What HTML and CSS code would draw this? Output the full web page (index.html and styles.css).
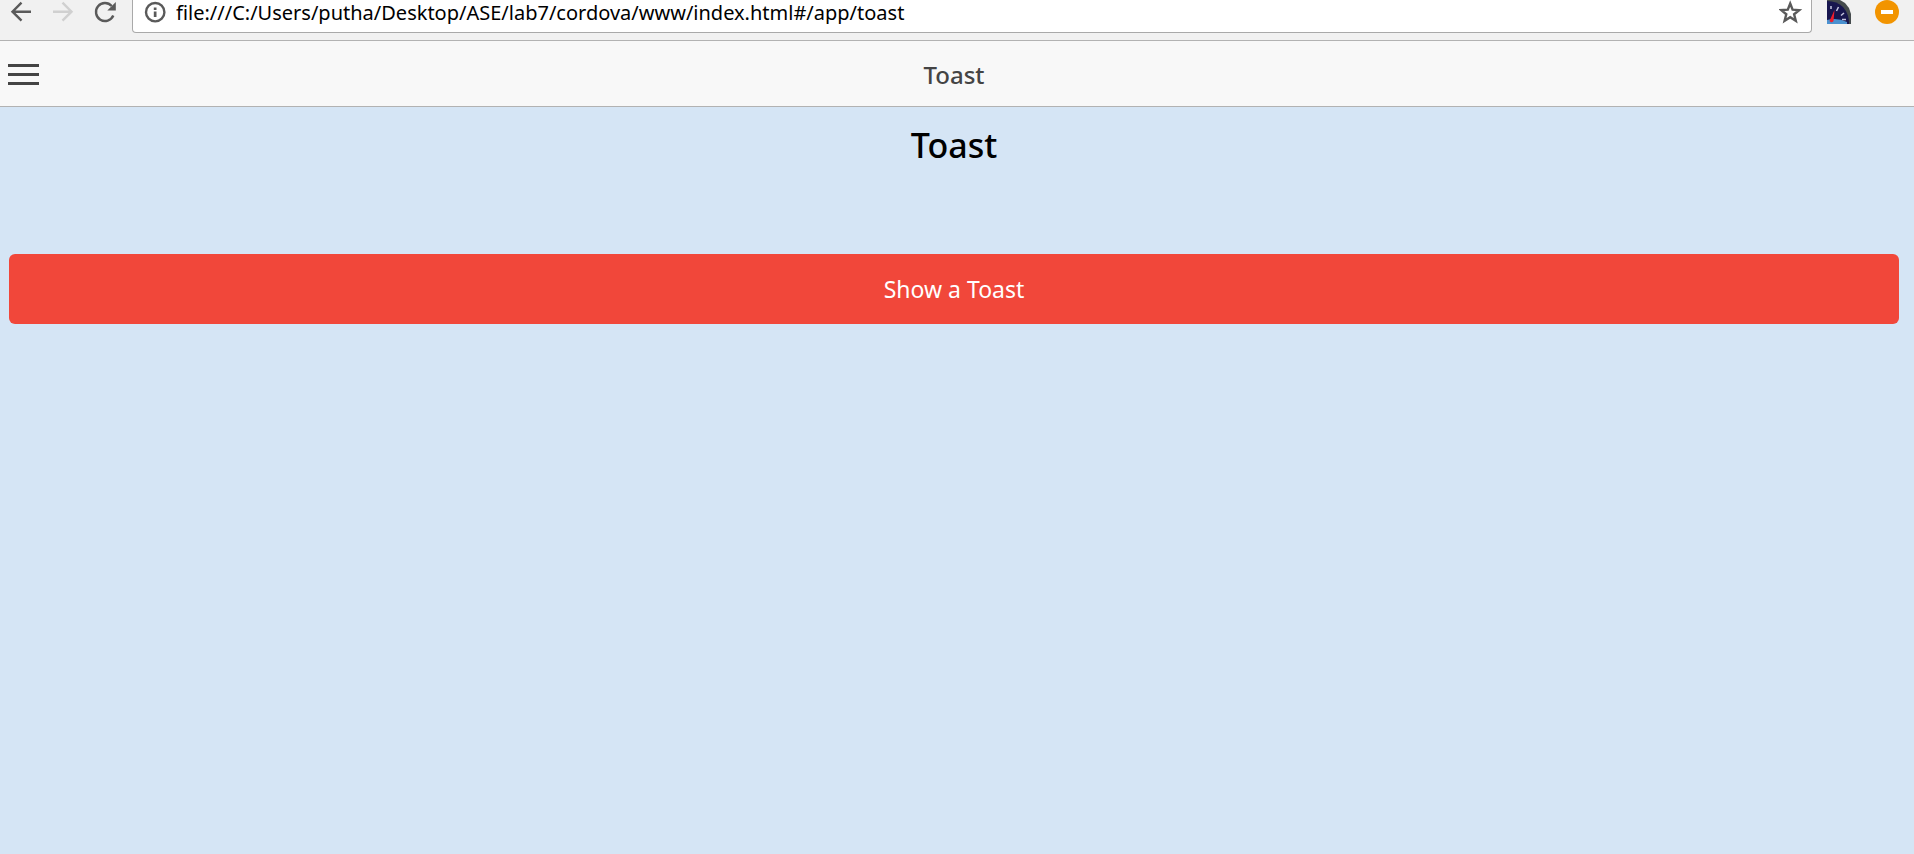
FILE: index.html
```html
<!DOCTYPE html>
<html lang="en">
<head>
<meta charset="utf-8">
<title>Toast</title>
<link rel="stylesheet" href="styles.css">
</head>
<body>
<div class="toolbar">
  <nav class="nav-buttons" aria-label="Browser">
    <button class="icon-button" aria-label="Back">
      <svg class="icon" viewBox="0 0 24 24"><path class="line" d="M22 11.7H3.5M12.5 2.7L3.5 11.7l9 9"/></svg>
    </button>
    <button class="icon-button disabled" aria-label="Forward" disabled>
      <svg class="icon" viewBox="0 0 24 24"><path class="line" d="M2 11.7h18.500M11.500 2.700l9 9-9 9"/></svg>
    </button>
    <button class="icon-button" aria-label="Reload">
      <svg class="icon" viewBox="0 0 24 24"><path class="line" d="M20.300 15.500A9 9 0 1 1 18.700 6"/><path class="solid" d="M22.800 2v8.500h-8.500z"/></svg>
    </button>
  </nav>
  <div class="address-bar">
    <button class="icon-button" aria-label="Page information">
      <svg class="icon" viewBox="0 0 24 24"><circle class="line" cx="12.200" cy="12.200" r="9.200"/><path class="solid" d="M10.800 7.500h2.700V10h-2.700zM10.800 11.500h2.700v5.500h-2.700z"/></svg>
    </button>
    <input class="address" type="text" aria-label="Address" value="file:///C:/Users/putha/Desktop/ASE/lab7/cordova/www/index.html#/app/toast">
    <button class="icon-button" aria-label="Bookmark this page">
      <svg class="icon" viewBox="0 0 24 24"><path class="line" d="M11.200 3.500l2.400 6.100 6.600.500-5.100 4.200 1.700 6.500-5.600-3.600-5.600 3.600 1.700-6.500-5.100-4.200 6.600-.500z"/></svg>
    </button>
  </div>
  <div class="extensions">
    <button class="icon-button" aria-label="Speed gauge">
      <svg class="icon" viewBox="0 0 24 24">
        <path fill="#454b4d" d="M0 0h13l5 3 4 5 2 6v10H0z"/>
        <path fill="#18164f" d="M0 3q9-1 14 5 5 5 6 14v2H0z"/>
        <path fill="#18164f" d="M0 1q10 0 16 6 6 7 6 16v1H0z"/>
        <path fill="#4a91d0" d="M0 20q10-3 20 2v2H0z"/>
        <path fill="none" stroke="#c5c5df" stroke-width="1.500" d="M4 6v3M11.500 7l-2 4M17 13l-3 2.500M19 19.500h-4"/>
        <path fill="#f01d2c" d="M7.500 10L2.500 21q2 2.500 4 0z"/>
      </svg>
    </button>
    <button class="icon-button" aria-label="Blocked content">
      <svg class="icon" viewBox="0 0 24 24"><circle cx="12" cy="12" r="12" fill="#f29400"/><path fill="#fff" d="M6 10h12v4H6z"/></svg>
    </button>
  </div>
</div>
<header class="header">
  <button class="menu" aria-label="Menu">
    <svg class="menu-icon" viewBox="0 0 31 21"><path fill="#444" d="M0 0h31v3H0zM0 9h31v3H0zM0 18h31v3H0z"/></svg>
  </button>
  <div class="title">Toast</div>
</header>
<main class="content">
  <h1 class="heading">Toast</h1>
  <button class="toast-button">Show a Toast</button>
</main>
</body>
</html>
```
FILE: styles.css
```css
* {
  box-sizing: border-box;
}

body {
  margin: 0;
  min-height: 100vh;
  background: #d5e5f5;
  color: #000;
  font-family: "Segoe UI", "Noto Sans", sans-serif;
}

button {
  padding: 0;
  border: 0;
  background: none;
  font-family: inherit;
}

.toolbar {
  display: flex;
  align-items: flex-start;
  gap: 15px;
  padding: 0 15px 7px 9px;
  border-bottom: 1px solid #b2b2b2;
  background: #f1f1f1;
}

.nav-buttons {
  display: flex;
  gap: 18px;
}

.extensions {
  display: flex;
  gap: 24px;
}

.icon-button {
  flex: none;
  color: #5a5a5a;
}

.icon-button.disabled {
  color: #d0d0d0;
}

.icon {
  display: block;
  width: 24px;
  height: 24px;
}

.line {
  fill: none;
  stroke: currentColor;
  stroke-width: 2.4;
}

.solid {
  fill: currentColor;
}

.address-bar {
  display: flex;
  flex: 1;
  gap: 9px;
  padding: 0 8px 8px 10px;
  border: 1px solid #a9a9a9;
  border-top: 0;
  border-radius: 0 0 4px 4px;
  background: #fff;
}

.address {
  flex: 1;
  min-width: 0;
  height: 24px;
  padding: 0;
  border: 0;
  outline: 0;
  background: none;
  color: #000;
  font-family: inherit;
  font-size: 20px;
}

.header {
  display: grid;
  grid-template-columns: 1fr auto 1fr;
  align-items: center;
  height: 66px;
  padding: 2px 14px 0 8px;
  border-bottom: 1px solid #b2b2b2;
  background: #f8f8f8;
}

.menu {
  justify-self: start;
}

.menu-icon {
  display: block;
  width: 31px;
  height: 21px;
}

.title {
  color: #444;
  font-size: 24px;
  font-weight: 500;
}

.content {
  padding: 12px 15px 12px 9px;
}

.heading {
  margin: 0 0 83px;
  font-size: 34px;
  font-weight: 500;
  line-height: 52px;
  text-align: center;
}

.toast-button {
  display: block;
  width: 100%;
  height: 70px;
  border-radius: 6px;
  background: #f1473a;
  color: #fff;
  font-size: 23px;
}
```
